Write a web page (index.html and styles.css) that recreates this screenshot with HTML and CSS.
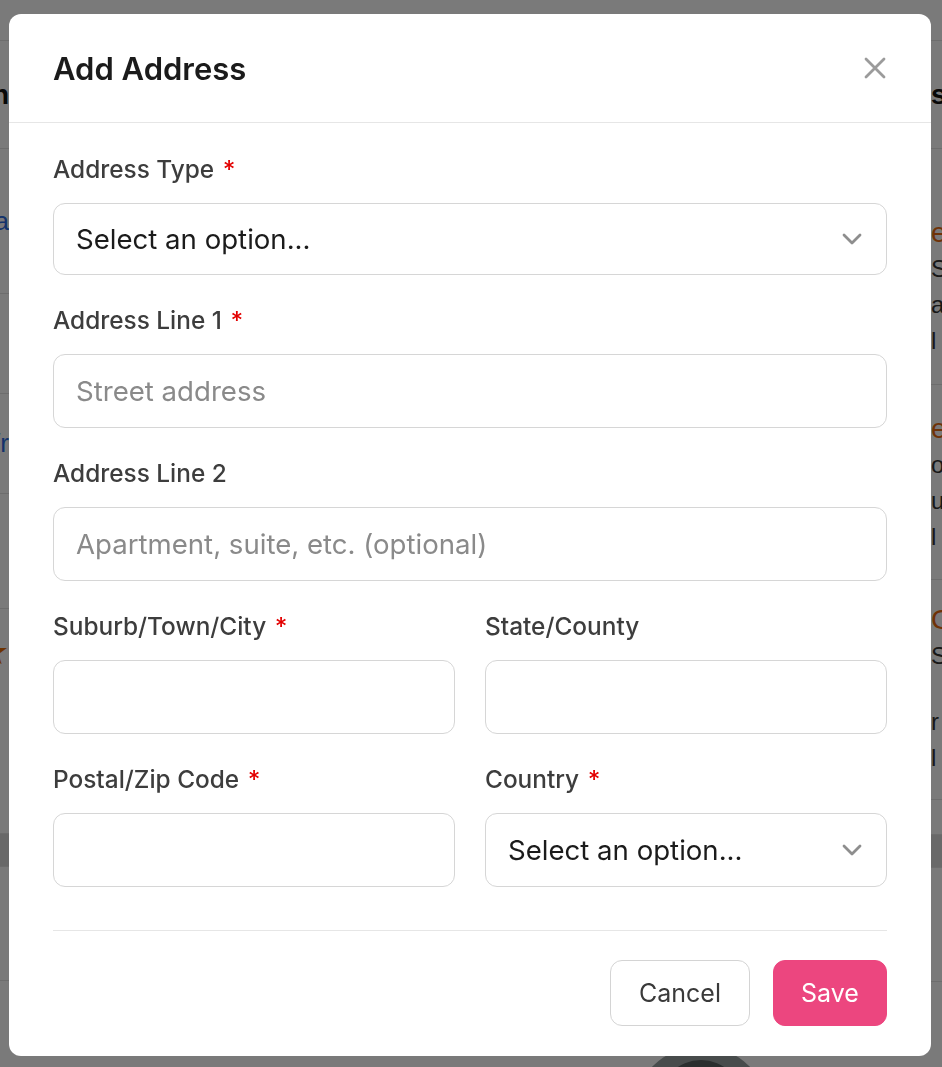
FILE: index.html
```html
<!DOCTYPE html>
<html lang="en">
<head>
<meta charset="utf-8">
<title>Add Address</title>
<link rel="stylesheet" href="styles.css">
</head>
<body>
<div class="page">
  <div class="col col-left">
    <div class="row r41"></div>
    <div class="row r108"><span class="t-bold">Location</span></div>
    <div class="row r145"><span class="t-link">Lorem ipsum dolor sit ama</span></div>
    <div class="row r100"></div>
    <div class="row r100"><span class="t-link">Lorem w/r</span></div>
    <div class="row r115"></div>
    <div class="row r225 top"><span class="t-star">★</span></div>
    <div class="row band"></div>
    <div class="row r114"></div>
    <div class="row rest"></div>
  </div>
  <div class="col col-mid">
    <div class="avatar"><div class="avatar-in"></div></div>
  </div>
  <div class="col col-right">
    <div class="row r41"></div>
    <div class="row r108"><span class="t-bold">s</span></div>
    <div class="row item">
      <span class="t-orange">e</span>
      <span class="t-grey">S</span>
      <span class="t-grey">a</span>
      <span class="t-grey">l -</span>
    </div>
    <div class="row item2">
      <span class="t-orange">e</span>
      <span class="t-grey">ox</span>
      <span class="t-grey">u</span>
      <span class="t-grey">l -</span>
    </div>
    <div class="row item3">
      <span class="t-orange">C</span>
      <span class="t-grey">S</span>
      <span class="t-grey gap">r c</span>
      <span class="t-grey">l -</span>
    </div>
    <div class="row r35"></div>
    <div class="row band"></div>
    <div class="row r114"></div>
    <div class="row rest"></div>
  </div>
</div>

<div class="overlay">
  <div class="modal" role="dialog" aria-labelledby="modal-title">
    <header class="modal-head">
      <h2 id="modal-title" class="modal-title">Add Address</h2>
      <button class="close" type="button" aria-label="Close">
        <svg width="22" height="22" viewBox="0 0 22 22" fill="none" stroke="#9b9b9b" stroke-width="2.8" stroke-linecap="round"><path d="M2 2L20 20M20 2L2 20"/></svg>
      </button>
    </header>

    <form class="modal-body">
      <div class="field">
        <label class="label">Address Type <span class="req">*</span></label>
        <div class="control select first">
          <span>Select an option...</span>
          <svg class="chev" width="20" height="12" viewBox="0 0 20 12" fill="none" stroke="#8e8e8e" stroke-width="2.8" stroke-linecap="round" stroke-linejoin="round"><path d="M2 2L10 10L18 2"/></svg>
        </div>
      </div>

      <div class="field">
        <label class="label">Address Line 1 <span class="req">*</span></label>
        <input class="control" type="text" placeholder="Street address">
      </div>

      <div class="field">
        <label class="label">Address Line 2</label>
        <input class="control" type="text" placeholder="Apartment, suite, etc. (optional)">
      </div>

      <div class="grid2">
        <div class="field">
          <label class="label">Suburb/Town/City <span class="req">*</span></label>
          <input class="control" type="text">
        </div>
        <div class="field">
          <label class="label">State/County</label>
          <input class="control" type="text">
        </div>
        <div class="field">
          <label class="label">Postal/Zip Code <span class="req">*</span></label>
          <input class="control" type="text">
        </div>
        <div class="field">
          <label class="label">Country <span class="req">*</span></label>
          <div class="control select">
            <span>Select an option...</span>
            <svg class="chev" width="20" height="12" viewBox="0 0 20 12" fill="none" stroke="#8e8e8e" stroke-width="2.8" stroke-linecap="round" stroke-linejoin="round"><path d="M2 2L10 10L18 2"/></svg>
          </div>
        </div>
      </div>
    </form>

    <footer class="modal-foot">
      <button class="btn btn-cancel" type="button">Cancel</button>
      <button class="btn btn-save" type="button">Save</button>
    </footer>
  </div>
</div>
</body>
</html>
```

FILE: styles.css
```css
* { box-sizing: border-box; }

html, body {
  margin: 0;
  height: 100%;
  overflow: hidden;
}

body {
  font-family: Inter, "Noto Sans", "Liberation Sans", sans-serif;
  background: #ffffff;
  color: #1b1b1b;
}

/* ---------- background page ---------- */
.page {
  display: flex;
  height: 1067px;
  font-family: "Liberation Sans", Arial, sans-serif;
}

.col { overflow: hidden; }
.col-left { width: 9px; }
.col-mid { flex: 1; position: relative; }
.col-right { width: 11px; }

.row {
  border-bottom: 1px solid #e4e4e4;
  display: flex;
  align-items: center;
  white-space: nowrap;
}
.col-left .row { justify-content: flex-end; }
.col-right .row { justify-content: flex-start; }

.r41 { height: 41px; }
.r108 { height: 108px; }
.r145 { height: 145px; }
.r100 { height: 100px; }
.r115 { height: 115px; }
.r225 { height: 225px; }
.r114 { height: 114px; }
.r35 { height: 35px; }
.rest { height: 100px; border-bottom: 0; }
.top { align-items: flex-start; padding-top: 22px; }
.band { height: 33px; background: #dcdcdc; }

.item, .item2, .item3 {
  flex-direction: column;
  align-items: flex-start;
  justify-content: flex-start;
}
.item { height: 236px; padding-top: 66px; }
.item2 { height: 195px; padding-top: 26px; }
.item3 { height: 220px; padding-top: 22px; }
.item span, .item2 span, .item3 span { line-height: 36px; }
.gap { margin-top: 30px; }

.t-bold { font-weight: 700; font-size: 28px; color: #111; }
.t-link { color: #2d6cdf; font-size: 26px; }
.t-star { color: #e36c00; font-size: 36px; }
.t-orange { color: #e86a10; font-size: 28px; }
.t-grey { color: #333; font-size: 24px; }

.avatar {
  position: absolute;
  left: 624px;
  top: 1046px;
  width: 136px;
  height: 136px;
  border-radius: 50%;
  background: #96a0a0;
  display: flex;
  justify-content: center;
}
.avatar-in {
  margin-top: 14px;
  width: 84px;
  height: 84px;
  border-radius: 50%;
  background: #586060;
}

/* ---------- overlay + modal ---------- */
.overlay {
  position: fixed;
  inset: 0;
  background: rgba(0, 0, 0, 0.52);
  padding: 14px 0 0 9px;
}

.modal {
  width: 922px;
  background: #ffffff;
  border-radius: 12px;
}

.modal-head {
  height: 109px;
  border-bottom: 1px solid #e6e6e6;
  padding: 0 44px;
  display: flex;
  align-items: center;
  justify-content: space-between;
}

.modal-title {
  margin: 0;
  font-size: 31px;
  font-weight: 600;
  color: #1b1b1b;
}

.close {
  border: 0;
  background: none;
  padding: 0;
  margin-right: 1px;
  width: 22px;
  height: 22px;
  display: flex;
}

.modal-body {
  padding: 30px 44px 43px;
  margin: 0;
}

.field { margin-bottom: 29px; }
.grid2 {
  display: grid;
  grid-template-columns: 1fr 1fr;
  column-gap: 30px;
}
.grid2 .field:nth-child(n+3) { margin-bottom: 0; }

.label {
  display: block;
  font-size: 24.4px;
  line-height: 32px;
  font-weight: 500;
  color: #3d3d3d;
  margin-bottom: 18px;
}

.req {
  color: #e30000;
  margin-left: 2px;
}

.control {
  display: flex;
  align-items: center;
  width: 100%;
  height: 74px;
  border: 1px solid #d6d6d6;
  border-radius: 12px;
  padding: 0 22px;
  font-family: inherit;
  font-size: 27.6px;
  color: #1b1b1b;
  background: #fff;
  outline: none;
}
.control.first { height: 72px; }
.control::placeholder { color: #8a8a8a; }

.select { justify-content: space-between; padding-right: 24px; }
.chev { display: block; }

.modal-foot {
  margin: 0 44px;
  border-top: 1px solid #e6e6e6;
  padding: 29px 0 30px;
  display: flex;
  justify-content: flex-end;
  gap: 23px;
}

.btn {
  height: 66px;
  padding: 0;
  border-radius: 12px;
  font-family: inherit;
  font-size: 25px;
  font-weight: 400;
  cursor: pointer;
}
.btn-cancel {
  width: 140px;
  background: #fff;
  border: 1px solid #d4d4d4;
  color: #3a3a3a;
}
.btn-save {
  width: 114px;
  background: #ec467f;
  border: 1px solid #ec467f;
  color: #fff;
}
```
